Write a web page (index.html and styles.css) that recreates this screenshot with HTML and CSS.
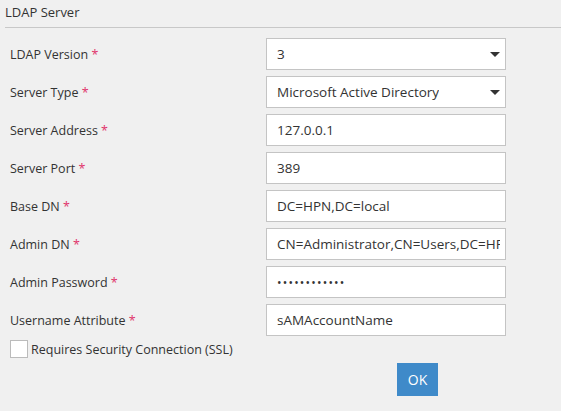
FILE: index.html
```html
<!DOCTYPE html>
<html lang="en">
<head>
    <meta charset="UTF-8">
    <title>LDAP Server</title>
    <link rel="stylesheet" href="styles.css">
</head>
<body>

    <div class="panel">
        <div class="panel__header">LDAP Server</div>

        <form class="ldap-form">
            <div class="ldap-form__rows">
                <div class="ldap-form__row">
                    <label class="ldap-form__label">LDAP Version <span class="req">*</span></label>
                    <div class="ldap-form__field ldap-form__field--select">
                        <span class="ldap-form__value">3</span>
                        <span class="caret"></span>
                    </div>
                </div>
                <div class="ldap-form__row">
                    <label class="ldap-form__label">Server Type <span class="req">*</span></label>
                    <div class="ldap-form__field ldap-form__field--select">
                        <span class="ldap-form__value">Microsoft Active Directory</span>
                        <span class="caret"></span>
                    </div>
                </div>
                <div class="ldap-form__row">
                    <label class="ldap-form__label">Server Address <span class="req">*</span></label>
                    <div class="ldap-form__field"><span class="ldap-form__value">127.0.0.1</span></div>
                </div>
                <div class="ldap-form__row">
                    <label class="ldap-form__label">Server Port <span class="req">*</span></label>
                    <div class="ldap-form__field"><span class="ldap-form__value">389</span></div>
                </div>
                <div class="ldap-form__row">
                    <label class="ldap-form__label">Base DN <span class="req">*</span></label>
                    <div class="ldap-form__field"><span class="ldap-form__value">DC=HPN,DC=local</span></div>
                </div>
                <div class="ldap-form__row">
                    <label class="ldap-form__label">Admin DN <span class="req">*</span></label>
                    <div class="ldap-form__field"><span class="ldap-form__value">CN=Administrator,CN=Users,DC=HPN,DC=local</span></div>
                </div>
                <div class="ldap-form__row">
                    <label class="ldap-form__label">Admin Password <span class="req">*</span></label>
                    <div class="ldap-form__field"><span class="ldap-form__value ldap-form__value--dots">&bull;&bull;&bull;&bull;&bull;&bull;&bull;&bull;&bull;&bull;&bull;&bull;</span></div>
                </div>
                <div class="ldap-form__row">
                    <label class="ldap-form__label">Username Attribute <span class="req">*</span></label>
                    <div class="ldap-form__field"><span class="ldap-form__value">sAMAccountName</span></div>
                </div>
            </div>

            <label class="ldap-form__check">
                <span class="checkbox"></span>
                Requires Security Connection (SSL)
            </label>

            <div class="ldap-form__actions">
                <button class="btn" type="button">OK</button>
            </div>
        </form>
    </div>

</body>
</html>
```

FILE: styles.css
```css
/* Page */
body {
    margin: 0;
    background: #f0f0f0;
    color: #333;
    font-family: "Open Sans", "Noto Sans", sans-serif;
    font-size: 12.5px;
}

/* Panel Header */
.panel__header {
    margin-left: 5px;
    height: 28px;
    box-sizing: border-box;
    line-height: 24px;
    font-size: 13px;
    border-bottom: 1px solid #c8c8c8;
}

/* Form */
.ldap-form {
    padding: 10px 0 0 10px;
}

.ldap-form__rows {
    display: grid;
    gap: 6px;
}

.ldap-form__row {
    display: grid;
    grid-template-columns: 256px 240px;
    align-items: center;
    height: 32px;
}

.req {
    color: #e0336b;
}

/* Fields */
.ldap-form__field {
    display: flex;
    align-items: center;
    height: 32px;
    box-sizing: border-box;
    border: 1px solid #c4c4c4;
    background: #fff;
    padding: 0 5px 0 10px;
    overflow: hidden;
    white-space: nowrap;
    font-size: 13.5px;
}

.ldap-form__field--select {
    justify-content: space-between;
}

.ldap-form__value {
    overflow: hidden;
}

.ldap-form__value--dots {
    font-size: 12px;
    letter-spacing: 1.2px;
}

/* Dropdown caret */
.caret {
    width: 0;
    height: 0;
    border-left: 5px solid transparent;
    border-right: 5px solid transparent;
    border-top: 5px solid #333;
}

/* Checkbox */
.ldap-form__check {
    display: flex;
    align-items: center;
    gap: 3px;
    height: 18px;
    margin-top: 4px;
}

.checkbox {
    width: 18px;
    height: 18px;
    box-sizing: border-box;
    border: 1px solid #bbb;
    background: #fff;
}

/* Actions */
.ldap-form__actions {
    padding: 5px 0 0 387px;
}

.btn {
    width: 41px;
    height: 33px;
    border: none;
    background: #3f8ac9;
    color: #fff;
    font-family: inherit;
    font-size: 14px;
    padding: 0;
}
```
